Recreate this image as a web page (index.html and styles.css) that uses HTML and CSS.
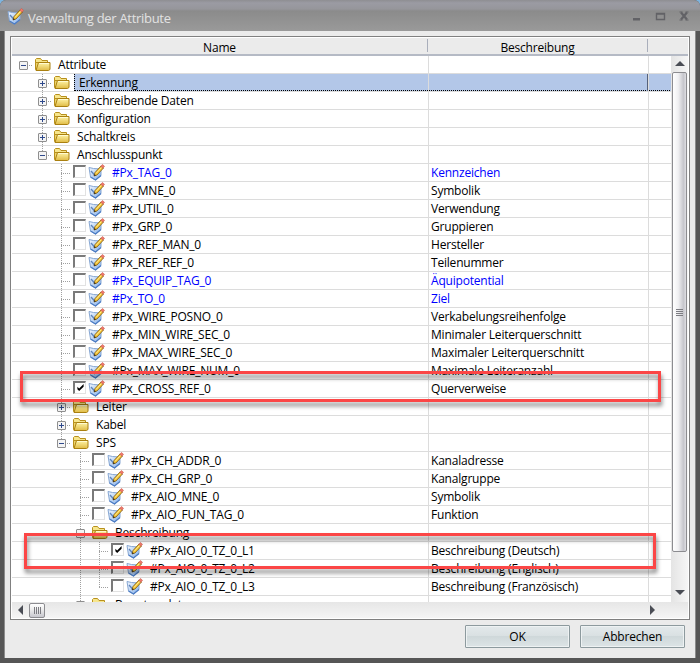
FILE: index.html
```html
<!DOCTYPE html>
<html lang="de">
<head>
    <meta charset="UTF-8">
    <title>Verwaltung der Attribute</title>
    <link rel="stylesheet" href="styles.css">
</head>
<body>
    <svg class="defs" width="0" height="0">
        <defs>
            <linearGradient id="gold" x1="0" y1="0" x2="0" y2="1">
                <stop offset="0" stop-color="#fff5a8"/>
                <stop offset="1" stop-color="#e0bb45"/>
            </linearGradient>
            <linearGradient id="blue" x1="0" y1="0" x2="1" y2="1">
                <stop offset="0" stop-color="#f4f9ff"/>
                <stop offset="1" stop-color="#82aee8"/>
            </linearGradient>
        </defs>
        <symbol id="folder" viewBox="0 0 17 15">
            <path d="M1.5 11.5v-9l1-1h4l1.5 2h5.500v2" fill="#f7e68c" stroke="#b8901c"/>
            <path d="M1.500 12.500v-7h12v7z" fill="#edd36a" stroke="#b8901c"/>
            <path d="M2 13.500L4.500 5.500h11.500v7l-1.500 1z" fill="url(#gold)" stroke="#aa8010"/>
            <path d="M5 6.500h10" stroke="#fffbd0"/>
        </symbol>
        <symbol id="attr" viewBox="0 0 17 17">
            <path d="M1 3.500L5.500 4.500L13 5v6.500L7.500 16L2.500 13z" fill="url(#blue)" stroke="#86a6d2"/>
            <path d="M2.500 13L7.500 16L13 11.500" fill="none" stroke="#4c7cc4" stroke-width="1.200"/>
            <path d="M3 7l3.500 4L8 9" fill="none" stroke="#5d83bb" stroke-width="1.300"/>
            <path d="M6 12l1-3.500L13 2l2.500 2L9 11z" fill="#f7c32c" stroke="#7a5a18" stroke-width=".8"/>
            <path d="M8 9.500L13.800 3.200" stroke="#fff0a0"/>
            <path d="M12.700 2.200L14.500.5l2 1.800-1.600 2z" fill="#f0786a" stroke="#c65c50" stroke-width=".6"/>
            <path d="M6 12l.5-1.800 1.500 1z" fill="#222"/>
        </symbol>
    </svg>

    <div class="window">
        <div class="titlebar">
            <svg class="app-icon"><use href="#attr"/></svg>
            <span class="title">Verwaltung der Attribute</span>
            <svg class="window-buttons" width="60" height="14" viewBox="0 0 60 14">
                <path d="M2 9h7v2.500h-7z" fill="#626266"/>
                <path d="M25.500 4.500h8v6h-8zM25 5h9" fill="none" stroke="#626266" stroke-width="1.400"/>
                <path d="M50 3.500l6 7M56 3.500l-6 7" stroke="#626266" stroke-width="2.200"/>
                <path d="M48.500 3h3M54.500 3h3M48.500 11h3M54.500 11h3" stroke="#626266"/>
            </svg>
        </div>

        <div class="body">
            <div class="grid">
                <div class="grid-header">
                    <div class="head-name">Name</div>
                    <div class="head-desc">Beschreibung</div>
                </div>
                <div class="grid-main">
                    <div class="rows" id="rows"></div>
                    <div class="vscroll">
                        <span class="arrow up"></span>
                        <div class="vthumb"><span class="grip"></span></div>
                        <span class="arrow down"></span>
                    </div>
                </div>
                <div class="hscroll">
                    <span class="arrow left"></span>
                    <div class="hthumb"><span class="grip"></span></div>
                    <span class="arrow right"></span>
                </div>
            </div>
            <div class="buttons">
                <button>OK</button>
                <button>Abbrechen</button>
            </div>
        </div>

        <div class="mark mark-cross"></div>
        <div class="mark mark-german"></div>
    </div>

    <script>
        // guides: one character per tree level
        //   ' ' empty, '|' line passing through, 't' branch, 'l' last branch, 'r' root
        const rows = [
            { guides: 'r', box: '-', name: 'Attribute' },
            { guides: ' t', box: '+', name: 'Erkennung', selected: true },
            { guides: ' t', box: '+', name: 'Beschreibende Daten' },
            { guides: ' t', box: '+', name: 'Konfiguration' },
            { guides: ' t', box: '+', name: 'Schaltkreis' },
            { guides: ' l', box: '-', name: 'Anschlusspunkt' },
            { guides: '  t', name: '#Px_TAG_0', desc: 'Kennzeichen', blue: true },
            { guides: '  t', name: '#Px_MNE_0', desc: 'Symbolik' },
            { guides: '  t', name: '#Px_UTIL_0', desc: 'Verwendung' },
            { guides: '  t', name: '#Px_GRP_0', desc: 'Gruppieren' },
            { guides: '  t', name: '#Px_REF_MAN_0', desc: 'Hersteller' },
            { guides: '  t', name: '#Px_REF_REF_0', desc: 'Teilenummer' },
            { guides: '  t', name: '#Px_EQUIP_TAG_0', desc: 'Äquipotential', blue: true },
            { guides: '  t', name: '#Px_TO_0', desc: 'Ziel', blue: true },
            { guides: '  t', name: '#Px_WIRE_POSNO_0', desc: 'Verkabelungsreihenfolge' },
            { guides: '  t', name: '#Px_MIN_WIRE_SEC_0', desc: 'Minimaler Leiterquerschnitt' },
            { guides: '  t', name: '#Px_MAX_WIRE_SEC_0', desc: 'Maximaler Leiterquerschnitt' },
            { guides: '  t', name: '#Px_MAX_WIRE_NUM_0', desc: 'Maximale Leiteranzahl' },
            { guides: '  t', name: '#Px_CROSS_REF_0', desc: 'Querverweise', checked: true },
            { guides: '  t', box: '+', name: 'Leiter' },
            { guides: '  t', box: '+', name: 'Kabel' },
            { guides: '  l', box: '-', name: 'SPS' },
            { guides: '   t', name: '#Px_CH_ADDR_0', desc: 'Kanaladresse' },
            { guides: '   t', name: '#Px_CH_GRP_0', desc: 'Kanalgruppe' },
            { guides: '   t', name: '#Px_AIO_MNE_0', desc: 'Symbolik' },
            { guides: '   t', name: '#Px_AIO_FUN_TAG_0', desc: 'Funktion' },
            { guides: '   t', box: '-', name: 'Beschreibung' },
            { guides: '   |t', name: '#Px_AIO_0_TZ_0_L1', desc: 'Beschreibung (Deutsch)', checked: true },
            { guides: '   |t', name: '#Px_AIO_0_TZ_0_L2', desc: 'Beschreibung (Englisch)' },
            { guides: '   |l', name: '#Px_AIO_0_TZ_0_L3', desc: 'Beschreibung (Französisch)' },
            { guides: '   t', box: '+', name: 'Benutzerdaten' }
        ];

        const guideClass = { ' ': '', '|': 'line', 't': 'line branch', 'l': 'line last branch', 'r': 'branch' };

        function expander(sign) {
            const bar = sign === '+' ? 'M2 4.5h5M4.5 2v5' : 'M2 4.5h5';
            return `<svg class="expander" viewBox="0 0 9 9"><rect x=".5" y=".5" width="8" height="8" rx=".5" fill="#f4f4f4" stroke="#8f8f8f"/><path d="${bar}" stroke="#2f4a8c"/></svg>`;
        }

        function rowHtml(row) {
            const guides = [...row.guides].map((g, i, all) =>
                `<span class="guide ${guideClass[g]}">${row.box && i === all.length - 1 ? expander(row.box) : ''}</span>`
            ).join('');
            const tick = row.checked ? '<svg viewBox="0 0 9 9"><path d="M1 3v3l2 2 5-5V0L3 5z"/></svg>' : '';
            const icon = row.box
                ? '<svg class="folder"><use href="#folder"/></svg>'
                : `<span class="check">${tick}</span><svg class="attr"><use href="#attr"/></svg>`;
            return `<div class="row ${row.selected ? 'selected' : ''} ${row.blue ? 'blue' : ''}">
                <div class="cell name">${guides}${icon}<span class="label">${row.name}</span></div>
                <div class="cell desc">${row.desc || ''}</div>
                <div class="cell rest"></div>
            </div>`;
        }

        document.getElementById('rows').innerHTML = rows.map(rowHtml).join('');
    </script>
</body>
</html>
```
FILE: styles.css
```css
* {
    box-sizing: border-box;
}

body {
    margin: 0;
    background: #7db4e0;
    font-family: "Open Sans", "Noto Sans", sans-serif;
    font-size: 12px;
    letter-spacing: -0.2px;
    color: #000;
}

.defs {
    position: absolute;
}

.window {
    position: relative;
    width: 700px;
    height: 663px;
    display: flex;
    flex-direction: column;
    background: #565656;
    border-radius: 6px 6px 0 0;
    overflow: hidden;
}

.titlebar {
    height: 31px;
    flex: none;
    display: flex;
    align-items: center;
    padding: 5px 9px 0 7px;
    background: linear-gradient(#8e8e92 0, #9b9ba3 3px, #96969b 9px, #8b8b8b 11px, #999 30px);
}

.app-icon {
    width: 17px;
    height: 17px;
    margin-top: -4px;
}

.title {
    margin-left: 4px;
    flex: 1;
    font-size: 13px;
    letter-spacing: -0.3px;
    color: #e2e2e2;
}

.window-buttons {
    margin-top: -5px;
}

.body {
    flex: 1;
    margin: 0 5px 5px;
    padding: 5px 5px 0;
    background: #ebebeb;
    box-shadow: -1px 0 #8c8c8c, 1px 0 #8c8c8c;
}

.grid {
    width: 680px;
    height: 584px;
    padding: 1px;
    border: 1px solid #808080;
    background: #fff;
}

.grid-header {
    display: flex;
    height: 18px;
    background: #ebebeb;
    border-bottom: 2px solid #b5bac5;
    border-bottom-style: double;
    line-height: 18px;
    text-align: center;
}

.head-name {
    width: 416px;
    margin: 1px 0 2px;
    border-right: 1px solid #a9aebb;
}

.head-desc {
    width: 220px;
    margin: 1px 0 2px;
    border-right: 1px solid #a9aebb;
}

.grid-main {
    display: flex;
    height: 546px;
}

.rows {
    width: 659px;
    overflow: hidden;
}

.row {
    display: flex;
    height: 18px;
    border-bottom: 1px solid #dcdcdc;
    line-height: 17px;
    white-space: pre;
}

.cell {
    border-right: 1px solid #dcdcdc;
}

.name {
    width: 417px;
    display: flex;
    padding-left: 2px;
}

.desc {
    width: 220px;
    padding-left: 2px;
}

.rest {
    flex: 1;
    border-right: 0;
}

.blue {
    color: #0000ff;
}

.guide {
    width: 19px;
    height: 18px;
    flex: none;
    padding: 5px 0 0 5px;
    background-repeat: no-repeat;
}

.guide.line {
    background-image: repeating-linear-gradient(#a0a0a0 0 1px, transparent 1px 2px);
    background-size: 1px 18px;
    background-position: 9px 0;
}

.guide.branch {
    background-image: repeating-linear-gradient(90deg, #a0a0a0 0 1px, transparent 1px 2px);
    background-size: 10px 1px;
    background-position: 9px 9px;
}

.guide.line.branch {
    background-image: repeating-linear-gradient(#a0a0a0 0 1px, transparent 1px 2px), repeating-linear-gradient(90deg, #a0a0a0 0 1px, transparent 1px 2px);
    background-size: 1px 18px, 10px 1px;
    background-position: 9px 0, 9px 9px;
}

.guide.line.last {
    background-size: 1px 10px, 10px 1px;
}

.expander {
    display: block;
    width: 9px;
    height: 9px;
}

.folder {
    width: 17px;
    height: 15px;
    margin: 1px 0 0 1px;
}

.folder + .label {
    margin-left: 4px;
    padding-left: 3px;
    flex: 1;
}

.check {
    width: 13px;
    height: 13px;
    margin: 1px 0 0 2px;
    padding: 1px;
    border: solid #7a7a7a;
    border-width: 2px 1px 1px 2px;
    border-right-color: #e2e2e2;
    border-bottom-color: #e2e2e2;
    background: #fff;
}

.check svg {
    display: block;
    width: 9px;
    height: 8px;
}

.attr {
    width: 17px;
    height: 17px;
    margin-left: 2px;
}

.attr + .label {
    margin-left: 7px;
}

.selected .label,
.selected .desc,
.selected .rest {
    background: linear-gradient(90deg, #000 50%, transparent 50%) 0 100% / 2px 1px repeat-x #b3c7e8;
}

.selected .label {
    border-left: 1px dotted #000;
    padding-left: 4px;
}

.selected .desc {
    box-shadow: inset -1px 0 #55617a;
}

.vscroll {
    width: 17px;
    display: flex;
    flex-direction: column;
    align-items: center;
    background: linear-gradient(90deg, #e4e4e4, #f6f6f6);
}

.arrow {
    border: 5px solid transparent;
}

.up {
    margin-top: 0;
    border-bottom-color: #4a4d55;
}

.down {
    margin-top: 38px;
    border-top-color: #4a4d55;
}

.vthumb {
    width: 15px;
    height: 480px;
    margin-top: 6px;
    display: flex;
    align-items: center;
    justify-content: center;
    border: 1px solid #8c8c90;
    border-radius: 2px;
    background: linear-gradient(90deg, #fff, #f0f0f2 40%, #c6c6cc 80%, #dedee2);
}

.vthumb .grip {
    width: 7px;
    height: 7px;
    background: repeating-linear-gradient(#7c7c82 0 1px, transparent 1px 2px);
}

.hscroll {
    display: flex;
    align-items: center;
    height: 16px;
    background: linear-gradient(#e6e6e6, #f5f5f5);
}

.left {
    margin-left: 1px;
    border-right-color: #4a4d55;
}

.right {
    margin-left: 605px;
    border-left-color: #4a4d55;
}

.hthumb {
    width: 16px;
    height: 15px;
    margin-left: 6px;
    display: flex;
    align-items: center;
    justify-content: center;
    border: 1px solid #8c8c90;
    border-radius: 2px;
    background: linear-gradient(#fff, #eee 40%, #c8c8ce);
}

.hthumb .grip {
    width: 7px;
    height: 7px;
    background: repeating-linear-gradient(90deg, #7c7c82 0 1px, transparent 1px 2px);
}

.buttons {
    display: flex;
    justify-content: flex-end;
    gap: 10px;
    padding: 5px 5px 0 0;
}

button {
    width: 105px;
    height: 23px;
    padding: 0;
    border: 1px solid #8d9a9e;
    border-radius: 1px;
    background: linear-gradient(#e3e9eb, #d9e0e2 48%, #cfd8da 50%, #dde4e6);
    box-shadow: inset 0 0 0 1px #eef2f3;
    font: inherit;
    letter-spacing: inherit;
}

/* highlight frames lying over the list */
.mark {
    position: absolute;
    border: 3px solid #fb4646;
    filter: drop-shadow(1px 4px 2px rgba(0, 0, 0, 0.5));
}

.mark-cross {
    left: 20px;
    top: 371px;
    width: 641px;
    height: 31px;
}

.mark-german {
    left: 24px;
    top: 533px;
    width: 632px;
    height: 36px;
}
```
